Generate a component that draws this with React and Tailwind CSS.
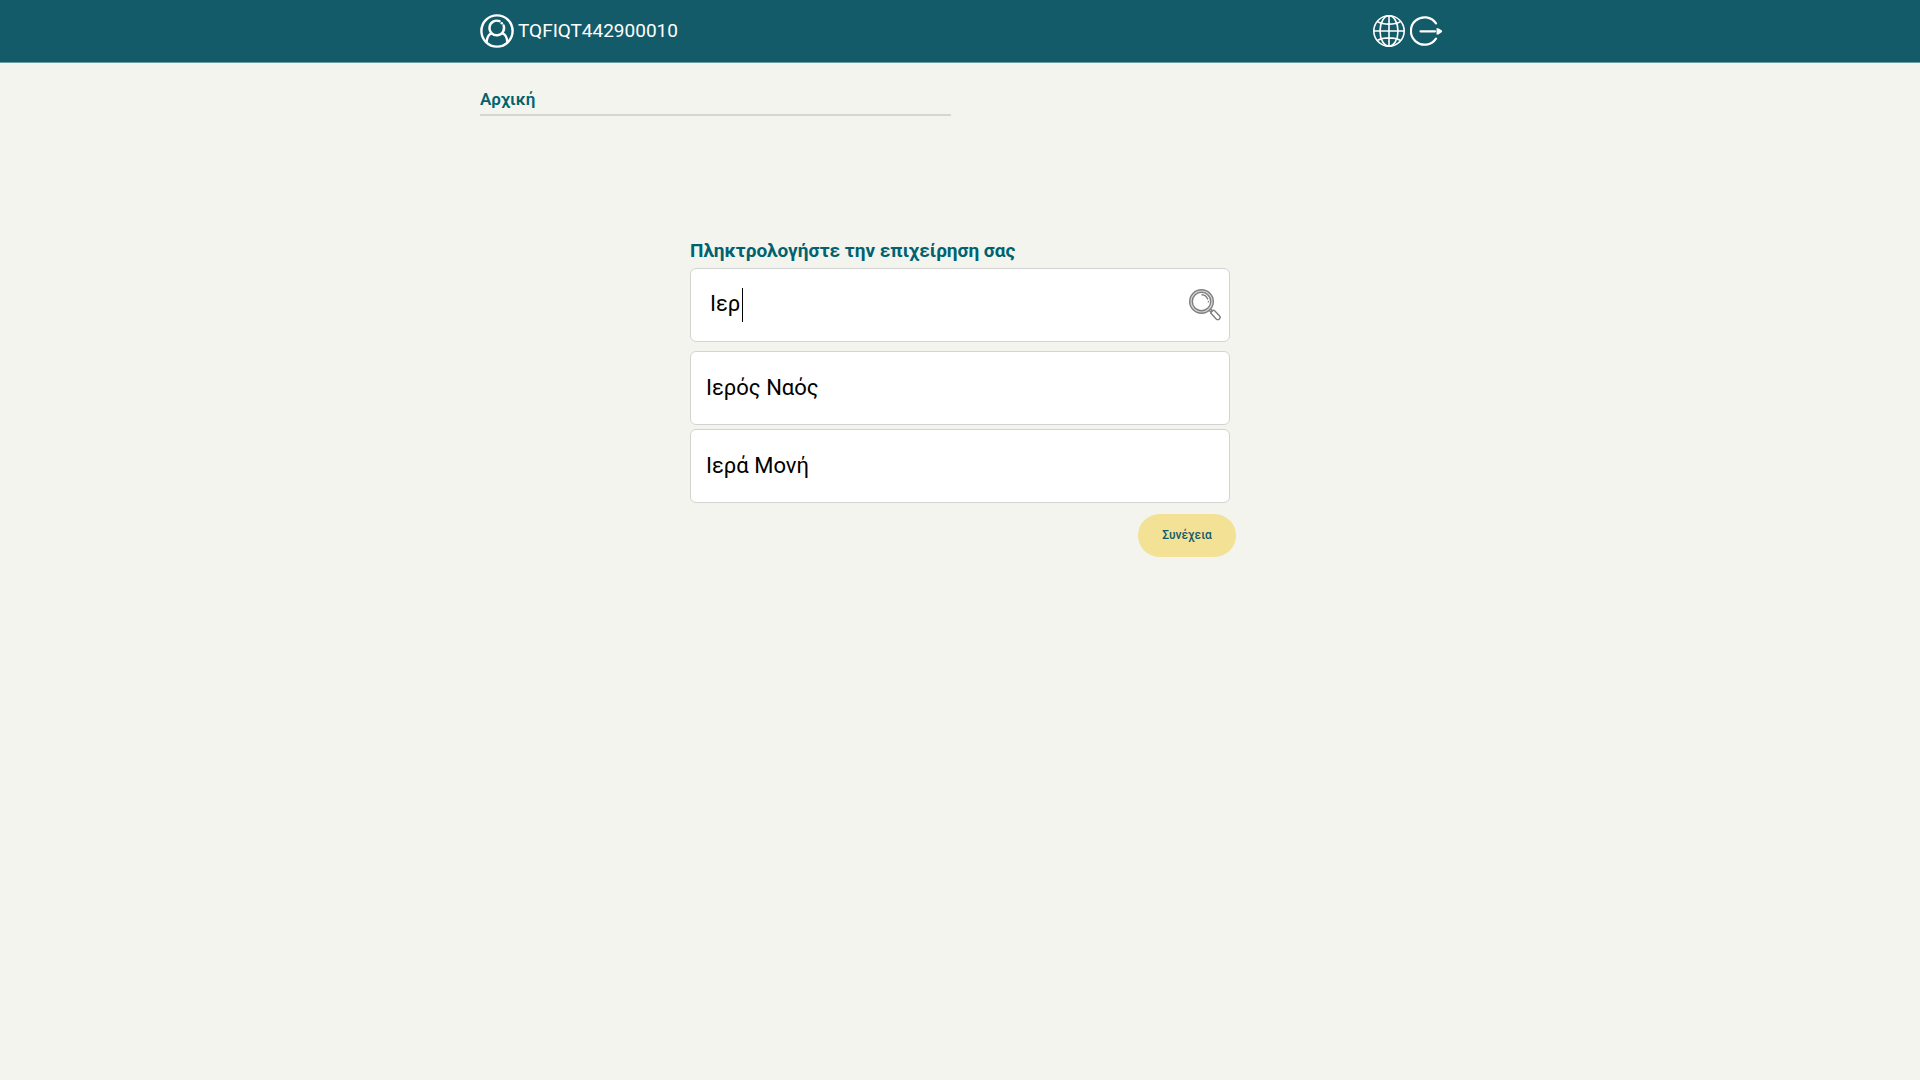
import { useState } from 'react'

const businesses = ['Ιερός Ναός', 'Ιερά Μονή']

function UserIcon() {
  return (
    <svg viewBox="0 0 34 34" className="size-[34px]" fill="none" stroke="currentColor" strokeWidth="2.4" aria-hidden="true">
      <circle cx="17" cy="17" r="15.6" />
      <path d="M19.5 7.2A7.3 7.3 0 1 0 23.6 11.4" strokeLinecap="round" />
      <path d="M6.6 28.2C7 22.6 8.6 20.2 12 19.2M27.4 28.2C27 22.6 25.4 20.2 22 19.2" />
      <circle cx="21.8" cy="9.2" r="1.3" fill="currentColor" stroke="none" />
    </svg>
  )
}

function GlobeIcon() {
  return (
    <svg viewBox="0 0 32 32" className="size-8" fill="none" stroke="currentColor" strokeWidth="1.6" aria-hidden="true">
      <circle cx="16" cy="16" r="15.2" />
      <ellipse cx="16" cy="16" rx="9" ry="15.2" />
      <path d="M16 1v30M1 16h30M4.4 6.6c6 3.4 17.2 3.4 23.2 0M4.4 25.4c6-3.4 17.2-3.4 23.2 0" />
    </svg>
  )
}

function ExitIcon() {
  return (
    <svg viewBox="0 0 32 32" className="size-8" fill="none" stroke="currentColor" strokeWidth="2.2" strokeLinecap="round" aria-hidden="true">
      <path d="M26 8.4A13.7 13.7 0 1 0 26 23.6" />
      <path d="M10.5 16.3h14.5" />
      <path d="M26.5 13.2h1.8l3.7 2.3v1.6l-3.7 2.3h-1.8z" fill="currentColor" stroke="none" />
    </svg>
  )
}

function SearchIcon() {
  return (
    <svg viewBox="0 0 32 32" className="size-8" fill="none" stroke="currentColor" strokeWidth="1.4" strokeLinecap="round" aria-hidden="true">
      <circle cx="12.5" cy="12.5" r="10.5" stroke="#d4d4d4" strokeWidth="2" />
      <circle cx="12.5" cy="12.5" r="11.8" />
      <circle cx="12.5" cy="12.5" r="9.2" />
      <path d="M13 5.8a6.7 6.7 0 0 1 5.6 4.2M19.4 12.4v.3" />
      <path d="M20.4 21.6l1.6 1.6M21.9 20.2l1.5 1.5" />
      <path d="M22.2 22.9l1.7-1.5q.8-.6 1.500.1l5 5.2a2.2 2.2 0 0 1-3.2 3.2l-5-5.300q-.8-.9 0-1.7z" />
    </svg>
  )
}

function Header() {
  return (
    <header className="border-b border-[#6d9ba3] bg-[#145b6a] text-white">
      <div className="mx-auto flex h-[62px] max-w-[960px] items-center justify-between">
        <a href="#profile" className="flex items-center gap-1 text-[19px]">
          <UserIcon />
          TQFIQT442900010
        </a>
        <div className="-mr-0.5 flex items-center gap-[5px]">
          <button type="button" aria-label="Γλώσσα">
            <GlobeIcon />
          </button>
          <button type="button" aria-label="Έξοδος">
            <ExitIcon />
          </button>
        </div>
      </div>
    </header>
  )
}

export default function App() {
  const [query, setQuery] = useState('Ιερ')

  return (
    <div className="min-h-screen bg-[#f3f4ee] font-[Roboto,sans-serif]">
      <Header />
      <main className="mx-auto max-w-[960px]">
        <nav className="w-[471px] max-w-full border-b-2 border-[#d5d6d2] pt-[25px] pb-[3px] text-[17px] leading-[23px] font-semibold text-[#006270]">
          <a href="#home">Αρχική</a>
        </nav>

        <form className="mx-auto mt-[122px] max-w-[540px]" onSubmit={(e) => e.preventDefault()}>
          <label htmlFor="business" className="block pb-1 text-[19px] leading-[26px] font-bold text-[#006270]">
            Πληκτρολογήστε την επιχείρηση σας
          </label>
          <div className="flex h-[74px] items-center rounded-md border border-[#d3d4d2] bg-white pr-2 pl-[19px]">
            <input
              id="business"
              type="text"
              autoComplete="off"
              value={query}
              onChange={(e) => setQuery(e.target.value)}
              className="field-sizing-content pb-0.5 text-[22px] leading-8 text-black caret-transparent outline-none"
            />
            <span className="ml-0.5 h-[34px] w-px bg-black" />
            <button type="submit" aria-label="Αναζήτηση" className="ml-auto text-[#7f7f7f]">
              <SearchIcon />
            </button>
          </div>

          <ul className="mt-[9px] flex flex-col gap-1">
            {businesses.map((name) => (
              <li key={name}>
                <button
                  type="button"
                  onClick={() => setQuery(name)}
                  className="flex h-[74px] w-full items-center rounded-md border border-[#d3d4d2] bg-white px-[15px] pb-0.5 text-[22px] text-black"
                >
                  {name}
                </button>
              </li>
            ))}
          </ul>

          <div className="-mr-1.5 mt-[11px] flex justify-end">
            <button type="submit" className="h-[43px] w-[98px] rounded-full bg-[#f3e196] pb-0.5 text-[12px] font-medium text-[#145b6a]">
              Συνέχεια
            </button>
          </div>
        </form>
      </main>
    </div>
  )
}
